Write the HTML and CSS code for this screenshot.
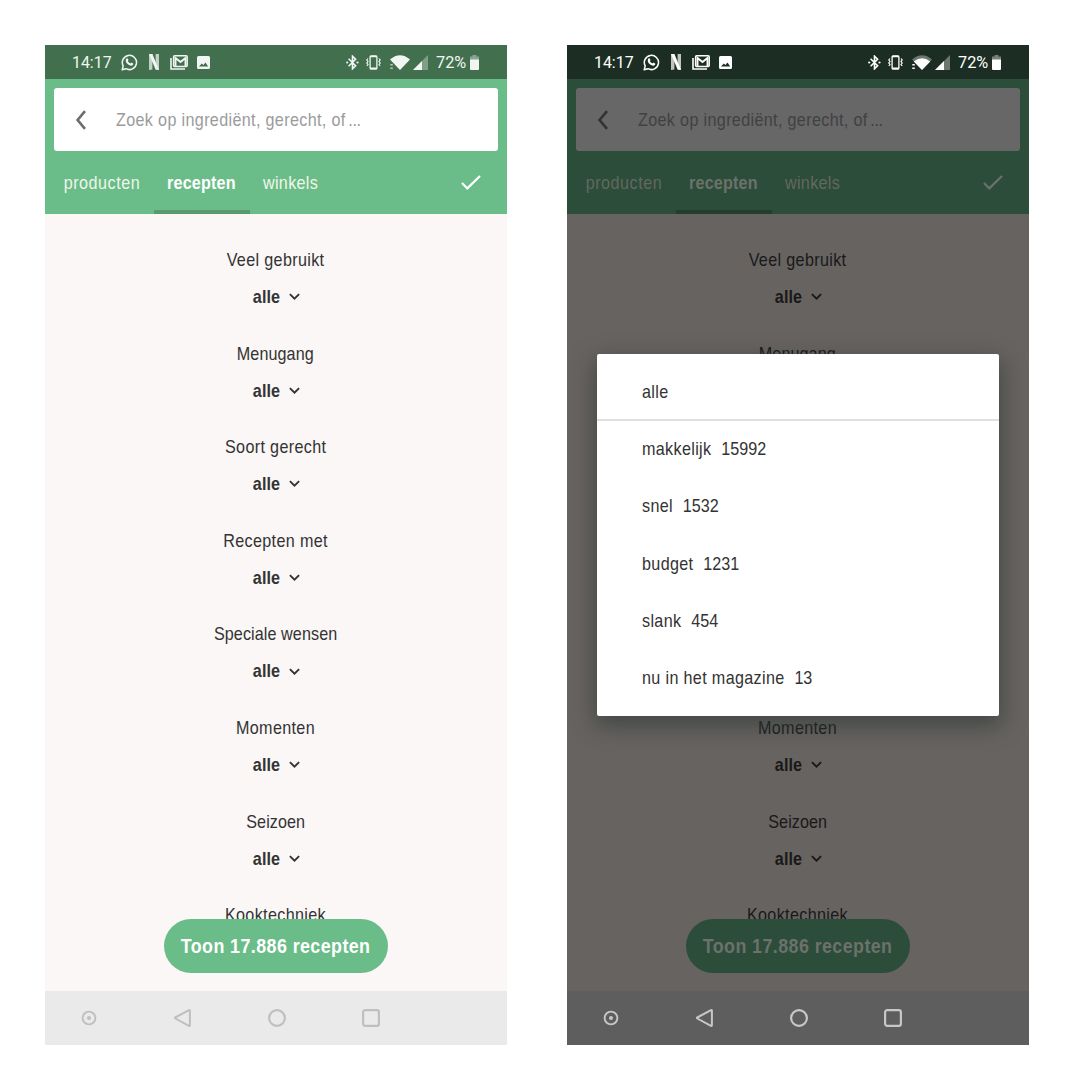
FILE: index.html
```html
<!DOCTYPE html>
<html lang="nl">
<head>
<meta charset="utf-8">
<title>Recepten filteren</title>
<link rel="stylesheet" href="styles.css">
</head>
<body>
<svg class="sprite" aria-hidden="true">
  <symbol id="whatsapp" viewBox="0 0 17 17"><path d="M1.2 15.8l1-3.9A7.1 7.1 0 1 1 5 14.7z" fill="none" stroke="currentColor" stroke-width="1.5" stroke-linejoin="round"/><path d="M5.4 4.6q.9-.8 1.5.2l.6 1.3-.7 1q.8 1.7 2.7 2.5l.9-1 1.7.9q.5.4-.1 1.3-1 1.2-2.8.7Q5.600 10.300 4.800 7.200q-.2-1.600.6-2.600z" fill="currentColor"/></symbol>
  <symbol id="netflix" viewBox="0 0 10 16"><path d="M0 0h3.400v15.500L0 16zM6.600 0H10v16l-3.400-.5z" fill="currentColor" opacity=".72"/><path d="M0 0h3.400L10 16l-3.400-.5z" fill="currentColor"/></symbol>
  <symbol id="mail" viewBox="0 0 18 15"><path d="M1 3v11h14" fill="none" stroke="currentColor" stroke-width="1.600"/><rect x="3.600" y=".8" width="13.600" height="10.800" rx="1" fill="none" stroke="currentColor" stroke-width="1.500"/><path d="M5.500 11V3l5 4 5-4v8" fill="none" stroke="currentColor" stroke-width="1.900"/></symbol>
  <symbol id="photo" viewBox="0 0 13 13"><path fill="currentColor" fill-rule="evenodd" d="M1.500 0h10A1.500 1.500 0 0 1 13 1.500v10a1.500 1.500 0 0 1-1.500 1.500h-10A1.500 1.500 0 0 1 0 11.500v-10A1.500 1.500 0 0 1 1.500 0zM2 10.500h9.200L8.500 6.600l-2.100 2.500-1.600-1.600z"/></symbol>
  <symbol id="bluetooth" viewBox="0 0 13 15"><path d="M2.600 3.800l7 7-3.100 3V1.200l3.100 3-7 7" fill="none" stroke="currentColor" stroke-width="1.600"/><circle cx="1.200" cy="7.500" r="1.100" fill="currentColor"/><circle cx="11.500" cy="7.500" r="1.100" fill="currentColor"/></symbol>
  <symbol id="vibrate" viewBox="0 0 15 15"><rect x="4.100" y=".8" width="6.800" height="13.400" rx="1.200" fill="none" stroke="currentColor" stroke-width="1.300"/><path d="M4 1.500h7M4 13.200h7" stroke="currentColor" stroke-width="1.500"/><path d="M2 3.500L.8 5 2 6.500.8 8 2 9.500.8 11M13 3.500L14.200 5 13 6.500 14.200 8 13 9.500 14.200 11" fill="none" stroke="currentColor" stroke-width="1.200"/></symbol>
  <symbol id="wifi" viewBox="0 0 20 15"><path d="M0 4.500Q10-4 20 4.500L10 15z" fill="currentColor"/><path d="M.3 9.700h2.500M.3 13.300h2.500" stroke="currentColor" stroke-width="1.600" opacity=".65"/></symbol>
  <symbol id="wifi-weak" viewBox="0 0 20 15"><path d="M0 4.500Q10-4 20 4.500L10 15z" fill="currentColor" opacity=".35"/><path d="M1.800 6.400Q10 .2 18.200 6.400L10 15z" fill="currentColor"/><path d="M.3 9.700h2.500M.3 13.300h2.500" stroke="currentColor" stroke-width="1.600"/></symbol>
  <symbol id="signal" viewBox="0 0 15 15"><path d="M15 0v15H0z" fill="currentColor" opacity=".35"/><path d="M9 6v9H0z" fill="currentColor"/></symbol>
  <symbol id="battery" viewBox="0 0 9 15"><path d="M2.500 0h4v1.500H9V5H0V1.500h2.500z" fill="currentColor" opacity=".4"/><path d="M0 4.600h9V14a1 1 0 0 1-1 1H1a1 1 0 0 1-1-1z" fill="currentColor"/></symbol>
  <symbol id="back" viewBox="0 0 12 20"><path d="M10 1.200L2.600 10l7.400 8.800" fill="none" stroke="currentColor" stroke-width="2.600"/></symbol>
  <symbol id="check" viewBox="0 0 20 15"><path d="M1 8l5.300 5.400L19 1" fill="none" stroke="currentColor" stroke-width="2.200"/></symbol>
  <symbol id="chevron" viewBox="0 0 10 7"><path d="M.8 1L5 5.200 9.200 1" fill="none" stroke="currentColor" stroke-width="1.700"/></symbol>
  <symbol id="nav-dot" viewBox="0 0 18 18"><circle cx="9" cy="9" r="6.400" fill="none" stroke="currentColor" stroke-width="1.900"/><circle cx="9" cy="9" r="2" fill="currentColor"/></symbol>
  <symbol id="nav-back" viewBox="0 0 18 18"><path d="M15 1.100L1.300 8.500q-.9.500 0 1L15 16.900q.9.300.9-.6V1.700q0-.9-.9-.6z" fill="none" stroke="currentColor" stroke-width="2" stroke-linejoin="round"/></symbol>
  <symbol id="nav-home" viewBox="0 0 18 18"><circle cx="9" cy="9" r="7.900" fill="none" stroke="currentColor" stroke-width="2.200"/></symbol>
  <symbol id="nav-recent" viewBox="0 0 18 18"><rect x="1.100" y="1.100" width="15.800" height="15.800" rx="2.200" fill="none" stroke="currentColor" stroke-width="2.200"/></symbol>
</svg>

<main class="screens">
  <section class="phone">
    <div class="status">
      <span class="time">14:17</span>
      <svg class="i-whatsapp"><use href="#whatsapp"/></svg>
      <svg class="i-netflix"><use href="#netflix"/></svg>
      <svg class="i-mail"><use href="#mail"/></svg>
      <svg class="i-photo"><use href="#photo"/></svg>
      <svg class="i-bluetooth"><use href="#bluetooth"/></svg>
      <svg class="i-vibrate"><use href="#vibrate"/></svg>
      <svg class="i-wifi"><use href="#wifi"/></svg>
      <svg class="i-signal"><use href="#signal"/></svg>
      <span class="percent">72%</span>
      <svg class="i-battery"><use href="#battery"/></svg>
    </div>
    <header class="header">
      <div class="search">
        <svg class="i-back"><use href="#back"/></svg>
        <span class="placeholder">Zoek op ingrediënt, gerecht, of<span class="dots">...</span></span>
      </div>
      <nav class="tabs">
        <div class="tab"><span>producten</span></div>
        <div class="tab active"><span>recepten</span></div>
        <div class="tab"><span>winkels</span></div>
        <svg class="i-check"><use href="#check"/></svg>
      </nav>
    </header>
    <div class="filters">
      <div class="filter"><span class="title">Veel gebruikt</span><b><span>alle</span><svg><use href="#chevron"/></svg></b></div>
      <div class="filter"><span class="title tight">Menugang</span><b><span>alle</span><svg><use href="#chevron"/></svg></b></div>
      <div class="filter"><span class="title">Soort gerecht</span><b><span>alle</span><svg><use href="#chevron"/></svg></b></div>
      <div class="filter"><span class="title">Recepten met</span><b><span>alle</span><svg><use href="#chevron"/></svg></b></div>
      <div class="filter"><span class="title tight">Speciale wensen</span><b><span>alle</span><svg><use href="#chevron"/></svg></b></div>
      <div class="filter"><span class="title">Momenten</span><b><span>alle</span><svg><use href="#chevron"/></svg></b></div>
      <div class="filter"><span class="title tight">Seizoen</span><b><span>alle</span><svg><use href="#chevron"/></svg></b></div>
      <div class="filter"><span class="title">Kooktechniek</span></div>
      <div class="show"><span>Toon 17.886 recepten</span></div>
    </div>
    <div class="navbar">
      <svg><use href="#nav-dot"/></svg><svg><use href="#nav-back"/></svg><svg><use href="#nav-home"/></svg><svg><use href="#nav-recent"/></svg>
    </div>
  </section>

  <section class="phone dimmed">
    <div class="status">
      <span class="time">14:17</span>
      <svg class="i-whatsapp"><use href="#whatsapp"/></svg>
      <svg class="i-netflix"><use href="#netflix"/></svg>
      <svg class="i-mail"><use href="#mail"/></svg>
      <svg class="i-photo"><use href="#photo"/></svg>
      <svg class="i-bluetooth"><use href="#bluetooth"/></svg>
      <svg class="i-vibrate"><use href="#vibrate"/></svg>
      <svg class="i-wifi"><use href="#wifi-weak"/></svg>
      <svg class="i-signal"><use href="#signal"/></svg>
      <span class="percent">72%</span>
      <svg class="i-battery"><use href="#battery"/></svg>
    </div>
    <header class="header">
      <div class="search">
        <svg class="i-back"><use href="#back"/></svg>
        <span class="placeholder">Zoek op ingrediënt, gerecht, of<span class="dots">...</span></span>
      </div>
      <nav class="tabs">
        <div class="tab"><span>producten</span></div>
        <div class="tab active"><span>recepten</span></div>
        <div class="tab"><span>winkels</span></div>
        <svg class="i-check"><use href="#check"/></svg>
      </nav>
    </header>
    <div class="filters">
      <div class="filter"><span class="title">Veel gebruikt</span><b><span>alle</span><svg><use href="#chevron"/></svg></b></div>
      <div class="filter"><span class="title tight">Menugang</span></div>
      <div class="filter"></div>
      <div class="filter"></div>
      <div class="filter"></div>
      <div class="filter"><span class="title">Momenten</span><b><span>alle</span><svg><use href="#chevron"/></svg></b></div>
      <div class="filter"><span class="title tight">Seizoen</span><b><span>alle</span><svg><use href="#chevron"/></svg></b></div>
      <div class="filter"><span class="title">Kooktechniek</span></div>
      <div class="show"><span>Toon 17.886 recepten</span></div>
    </div>
    <div class="navbar">
      <svg><use href="#nav-dot"/></svg><svg><use href="#nav-back"/></svg><svg><use href="#nav-home"/></svg><svg><use href="#nav-recent"/></svg>
    </div>
    <div class="dialog">
      <div class="option all"><div class="label">alle</div></div>
      <div class="option"><div class="label">makkelijk<span class="count">15992</span></div></div>
      <div class="option"><div class="label">snel<span class="count">1532</span></div></div>
      <div class="option"><div class="label">budget<span class="count">1231</span></div></div>
      <div class="option"><div class="label">slank<span class="count">454</span></div></div>
      <div class="option"><div class="label">nu in het magazine<span class="count">13</span></div></div>
    </div>
  </section>
</main>
</body>
</html>
```
FILE: styles.css
```css
* { box-sizing: border-box; }

body {
  margin: 0;
  background: #fff;
  font-family: "Liberation Sans", Arial, sans-serif;
  font-size: 19px;
}

svg { display: block; flex: none; }
.sprite { position: absolute; width: 0; height: 0; }

.screens {
  display: flex;
  gap: 60.5px;
  padding: 45px;
  width: 1074px;
  height: 1090px;
}

.phone {
  --status: #42704f;
  --status-ink: #f1f6f2;
  --green: #6abd88;
  --field: #fff;
  --arrow: #6c6c6c;
  --hint: #9b9b9b;
  --tab: #f0f6e9;
  --tab-active: #fff;
  --line: #5a9a6f;
  --page: #faf7f6;
  --ink: #333;
  --nav: #eaeaea;
  --nav-ink: #bfbfbf;
  position: relative;
  flex: none;
  display: flex;
  flex-direction: column;
  width: 461.5px;
  height: 1000px;
  background: var(--page);
}

.dimmed {
  --status: #1c2e23;
  --status-ink: #fff;
  --green: #2b4d39;
  --field: #676767;
  --arrow: #333;
  --hint: #414141;
  --tab: #64685f;
  --tab-active: #6d716c;
  --line: #243e2e;
  --page: #676361;
  --ink: #191919;
  --nav: #5e5e5e;
  --nav-ink: #c7c7c7;
}

/* The typeface is condensed horizontally and slightly tracked. */
.placeholder, .tab span, .title, .filter b span, .show span, .label {
  display: inline-block;
  transform: scaleX(.85);
  letter-spacing: .4px;
  white-space: nowrap;
}

.status {
  display: flex;
  align-items: center;
  height: 34px;
  padding-left: 27px;
  background: var(--status);
  color: var(--status-ink);
  font-family: Roboto, sans-serif;
  font-size: 16.3px;
}
.time { width: 49px; font-size: 15.9px; }
.percent { width: 34px; margin-left: 8px; white-space: nowrap; }
.i-whatsapp { width: 17px; height: 17px; }
.i-netflix { width: 10px; height: 16px; margin-left: 10.5px; }
.i-mail { width: 18px; height: 15px; margin-left: 11.5px; }
.i-photo { width: 13px; height: 13px; margin-left: 9px; }
.i-bluetooth { width: 13px; height: 15px; margin-left: 136px; }
.i-vibrate { width: 15px; height: 15px; margin-left: 7px; }
.i-wifi { width: 20px; height: 15px; margin-left: 9px; }
.i-signal { width: 15px; height: 15px; margin-left: 3px; }
.i-battery { width: 9px; height: 15px; margin-left: 0; }

.header { height: 134.5px; padding: 9px 9px 0; background: var(--green); }
.search {
  display: flex;
  align-items: center;
  height: 63px;
  padding-left: 21px;
  border-radius: 3px;
  background: var(--field);
}
.i-back { width: 12px; height: 20px; color: var(--arrow); }
.placeholder {
  margin-left: 29px;
  color: var(--hint);
  transform-origin: left;
}
.dots { margin-left: 3px; letter-spacing: -.3px; }

.tabs { display: flex; align-items: center; height: 62.5px; color: var(--tab); }
.tab {
  display: flex;
  align-items: center;
  justify-content: center;
  width: 95.5px;
  height: 100%;
  border-bottom: 4.5px solid transparent;
  padding-top: 5px;
}
.tab:first-child { width: 100px; padding-right: 4px; }
.tab:first-child span { letter-spacing: .6px; }
.tab.active { border-color: var(--line); color: var(--tab-active); font-weight: bold; }
.tab.active span { letter-spacing: .2px; }
.tab:nth-child(3) { width: 83px; }
.i-check { width: 20px; height: 15px; margin-left: 128px; color: var(--tab-active); }

.filters {
  position: relative;
  flex: 1;
  padding-top: 34.5px;
  overflow: hidden;
  color: var(--ink);
}
.filter {
  display: flex;
  flex-direction: column;
  align-items: center;
  gap: 13px;
  height: 93.6px;
  line-height: 24px;
}
.title.tight { letter-spacing: .1px; }
.filter b { display: flex; align-items: center; gap: 9px; }
.filter b span { margin-left: -4px; letter-spacing: .1px; transform-origin: right; }
.filter svg { width: 11px; height: 7.7px; }

.show {
  position: absolute;
  left: 118.5px;
  bottom: 18px;
  display: flex;
  align-items: center;
  justify-content: center;
  width: 224.5px;
  height: 54px;
  border-radius: 27px;
  background: var(--green);
  color: var(--tab-active);
  font-size: 21px;
  font-weight: bold;
}
.show span { letter-spacing: .5px; }

.navbar {
  display: flex;
  align-items: center;
  gap: 76px;
  height: 54px;
  padding-left: 34.5px;
  background: var(--nav);
  color: var(--nav-ink);
}
.navbar svg { width: 18px; height: 18px; }

.dialog {
  position: absolute;
  top: 309px;
  left: 30px;
  width: 402px;
  height: 362px;
  border-radius: 2px;
  background: #fff;
  box-shadow: 0 8px 22px 2px rgba(50, 60, 55, .7);
  color: #333;
}
.option {
  display: flex;
  align-items: center;
  height: 57.3px;
  padding-left: 45px;
}
.option.all { height: 66.5px; padding-top: 11px; border-bottom: 2px solid #e0e0e0; }
.label { transform-origin: left; }
.count { margin-left: 11.5px; letter-spacing: 0; }
```
